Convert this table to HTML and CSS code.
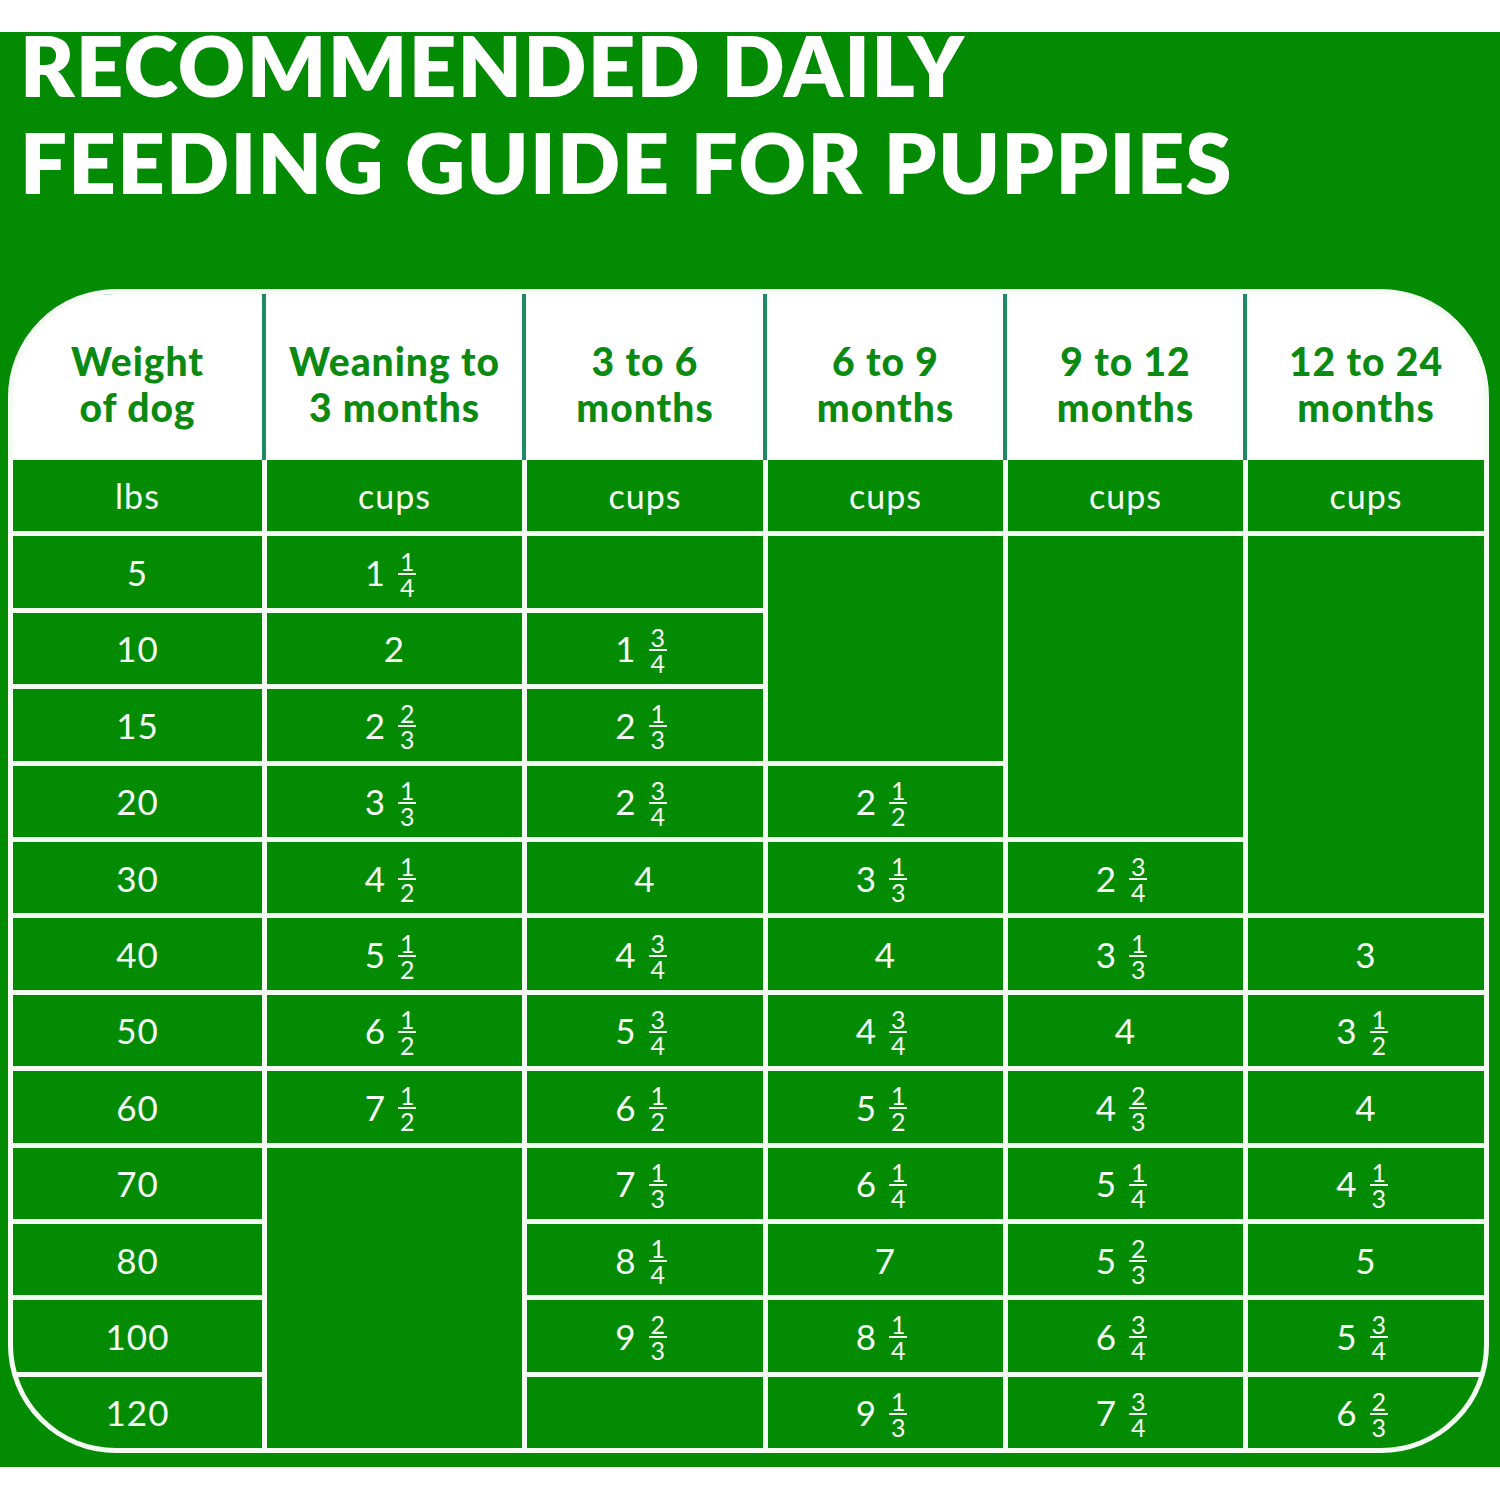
FILE: index.html
```html
<!DOCTYPE html>
<html>
<head>
<meta charset="utf-8">
<link rel="stylesheet" href="styles.css">
</head>
<body>
<div class="panel">
  <h1 class="title"><span class="line">RECOMMENDED DAILY</span><span class="line second">FEEDING GUIDE FOR PUPPIES</span></h1>
  <div class="table">
    <div class="th">Weight<br>of dog</div>
    <div class="th">Weaning to<br>3 months</div>
    <div class="th">3 to 6<br>months</div>
    <div class="th">6 to 9<br>months</div>
    <div class="th">9 to 12<br>months</div>
    <div class="th last">12 to 24<br>months</div>

    <div class="td unit">lbs</div>
    <div class="td unit">cups</div>
    <div class="td unit">cups</div>
    <div class="td unit">cups</div>
    <div class="td unit">cups</div>
    <div class="td unit">cups</div>

    <div class="td">5</div>
    <div class="td"><span class="w">1</span><span class="fr"><span class="n">1</span><span class="d">4</span></span></div>
    <div class="td"></div>
    <div class="td span3"></div>
    <div class="td span4"></div>
    <div class="td span5"></div>

    <div class="td">10</div>
    <div class="td">2</div>
    <div class="td"><span class="w">1</span><span class="fr"><span class="n">3</span><span class="d">4</span></span></div>

    <div class="td">15</div>
    <div class="td"><span class="w">2</span><span class="fr"><span class="n">2</span><span class="d">3</span></span></div>
    <div class="td"><span class="w">2</span><span class="fr"><span class="n">1</span><span class="d">3</span></span></div>

    <div class="td">20</div>
    <div class="td"><span class="w">3</span><span class="fr"><span class="n">1</span><span class="d">3</span></span></div>
    <div class="td"><span class="w">2</span><span class="fr"><span class="n">3</span><span class="d">4</span></span></div>
    <div class="td"><span class="w">2</span><span class="fr"><span class="n">1</span><span class="d">2</span></span></div>

    <div class="td">30</div>
    <div class="td"><span class="w">4</span><span class="fr"><span class="n">1</span><span class="d">2</span></span></div>
    <div class="td">4</div>
    <div class="td"><span class="w">3</span><span class="fr"><span class="n">1</span><span class="d">3</span></span></div>
    <div class="td"><span class="w">2</span><span class="fr"><span class="n">3</span><span class="d">4</span></span></div>

    <div class="td">40</div>
    <div class="td"><span class="w">5</span><span class="fr"><span class="n">1</span><span class="d">2</span></span></div>
    <div class="td"><span class="w">4</span><span class="fr"><span class="n">3</span><span class="d">4</span></span></div>
    <div class="td">4</div>
    <div class="td"><span class="w">3</span><span class="fr"><span class="n">1</span><span class="d">3</span></span></div>
    <div class="td">3</div>

    <div class="td">50</div>
    <div class="td"><span class="w">6</span><span class="fr"><span class="n">1</span><span class="d">2</span></span></div>
    <div class="td"><span class="w">5</span><span class="fr"><span class="n">3</span><span class="d">4</span></span></div>
    <div class="td"><span class="w">4</span><span class="fr"><span class="n">3</span><span class="d">4</span></span></div>
    <div class="td">4</div>
    <div class="td"><span class="w">3</span><span class="fr"><span class="n">1</span><span class="d">2</span></span></div>

    <div class="td">60</div>
    <div class="td"><span class="w">7</span><span class="fr"><span class="n">1</span><span class="d">2</span></span></div>
    <div class="td"><span class="w">6</span><span class="fr"><span class="n">1</span><span class="d">2</span></span></div>
    <div class="td"><span class="w">5</span><span class="fr"><span class="n">1</span><span class="d">2</span></span></div>
    <div class="td"><span class="w">4</span><span class="fr"><span class="n">2</span><span class="d">3</span></span></div>
    <div class="td">4</div>

    <div class="td">70</div>
    <div class="td span4"></div>
    <div class="td"><span class="w">7</span><span class="fr"><span class="n">1</span><span class="d">3</span></span></div>
    <div class="td"><span class="w">6</span><span class="fr"><span class="n">1</span><span class="d">4</span></span></div>
    <div class="td"><span class="w">5</span><span class="fr"><span class="n">1</span><span class="d">4</span></span></div>
    <div class="td"><span class="w">4</span><span class="fr"><span class="n">1</span><span class="d">3</span></span></div>

    <div class="td">80</div>
    <div class="td"><span class="w">8</span><span class="fr"><span class="n">1</span><span class="d">4</span></span></div>
    <div class="td">7</div>
    <div class="td"><span class="w">5</span><span class="fr"><span class="n">2</span><span class="d">3</span></span></div>
    <div class="td">5</div>

    <div class="td">100</div>
    <div class="td"><span class="w">9</span><span class="fr"><span class="n">2</span><span class="d">3</span></span></div>
    <div class="td"><span class="w">8</span><span class="fr"><span class="n">1</span><span class="d">4</span></span></div>
    <div class="td"><span class="w">6</span><span class="fr"><span class="n">3</span><span class="d">4</span></span></div>
    <div class="td"><span class="w">5</span><span class="fr"><span class="n">3</span><span class="d">4</span></span></div>

    <div class="td">120</div>
    <div class="td"></div>
    <div class="td"><span class="w">9</span><span class="fr"><span class="n">1</span><span class="d">3</span></span></div>
    <div class="td"><span class="w">7</span><span class="fr"><span class="n">3</span><span class="d">4</span></span></div>
    <div class="td"><span class="w">6</span><span class="fr"><span class="n">2</span><span class="d">3</span></span></div>
  </div>
</div>
</body>
</html>
```

FILE: styles.css
```css
html, body {
  margin: 0;
  padding: 0;
  background: #ffffff;
}

body {
  padding-top: 32px;
  height: 1500px;
  box-sizing: border-box;
}

.panel {
  background: #048b04;
  height: 1435px;
  padding: 0 10px 0 8px;
  box-sizing: border-box;
}

.title {
  margin: 0;
  padding: 0 0 0 12px;
  height: 257px;
  font-family: "Lato", "Liberation Sans", sans-serif;
  font-weight: 800;
  font-size: 83px;
  color: #ffffff;
  letter-spacing: 1.3px;
  box-sizing: border-box;
}

.title .line {
  display: block;
  line-height: 66px;
  white-space: nowrap;
}

.title .line.second {
  margin-top: 31px;
}

.table {
  display: grid;
  grid-template-columns: 249px 255px 236px 235px 235px 236px;
  grid-template-rows: 161px repeat(13, 71.4px);
  column-gap: 5px;
  row-gap: 5px;
  border: 5px solid #f3fbf2;
  border-radius: 108px;
  background: #f3fbf2;
  overflow: hidden;
  width: fit-content;
}

.th {
  background: #ffffff;
  color: #0b8a12;
  font-family: "Lato", "Liberation Sans", sans-serif;
  font-weight: 900;
  font-size: 39px;
  line-height: 46px;
  letter-spacing: 1px;
  display: flex;
  align-items: center;
  justify-content: center;
  text-align: center;
  box-shadow: 4px 0 0 #1f8a63;
  margin-bottom: -5px;
  padding-top: 14px;
  box-sizing: border-box;
}

.th.last {
  box-shadow: none;
}

.td {
  background: #048b04;
  color: #f3fbf2;
  font-family: "Lato", "Liberation Sans", sans-serif;
  font-weight: 400;
  font-size: 35px;
  letter-spacing: 1px;
  display: flex;
  align-items: center;
  justify-content: center;
}

.td.unit {
  font-size: 34px;
}

.span3 { grid-row: span 3; }
.span4 { grid-row: span 4; }
.span5 { grid-row: span 5; }

.w {
  margin-right: 12px;
  margin-left: -8px;
}

.fr {
  display: inline-flex;
  flex-direction: column;
  align-items: center;
  font-size: 25px;
  letter-spacing: 0;
  margin-top: 4px;
}

.fr .n {
  line-height: 21px;
  padding: 0 1px 1px;
  border-bottom: 2px solid #f3fbf2;
  min-width: 16px;
  text-align: center;
}

.fr .d {
  line-height: 22px;
  padding-top: 1px;
}
```
